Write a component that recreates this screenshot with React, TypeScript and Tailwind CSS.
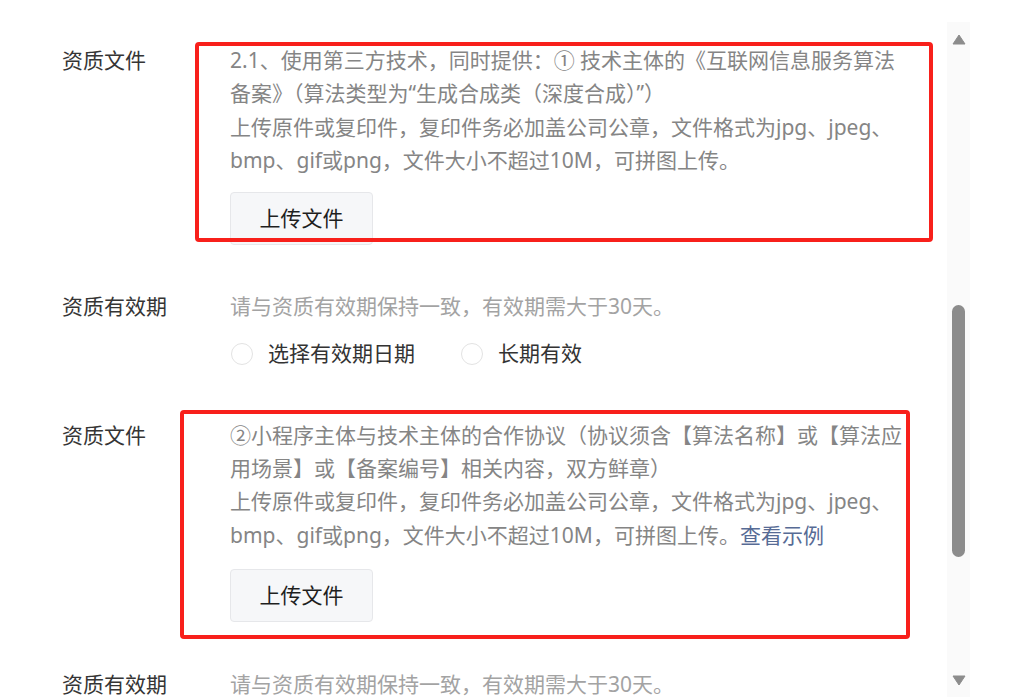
import React from 'react';

const FONT = { fontFamily: '"Microsoft YaHei", "Noto Sans", "Noto Sans CJK SC", sans-serif' };

const UploadButton = ({ className = '' }: { className?: string }) => (
  <button
    className={`w-[143px] h-[53px] rounded-[4px] border border-[#e6e7ea] bg-[#f6f7f9] text-[21px] text-[#1f1f1f] ${className}`}
  >
    上传文件
  </button>
);

const Radio = ({ label }: { label: string }) => (
  <div className="flex items-center">
    <span className="w-[22px] h-[22px] rounded-full border border-[#e3e3e3] bg-white" />
    <span className="ml-[15px] text-[21px] text-[#333]">{label}</span>
  </div>
);

const Label = ({ children }: { children: React.ReactNode }) => (
  <div className="w-[230px] shrink-0 pl-[62px] text-[21px] text-[#353535] whitespace-nowrap">{children}</div>
);

const ValidityRow = ({ withRadios = true }: { withRadios?: boolean }) => (
  <div className="flex">
    <Label>资质有效期</Label>
    <div className="flex-1">
      <p className="text-[21px] text-[#a3a3a3]">请与资质有效期保持一致，有效期需大于30天。</p>
      {withRadios && (
        <div className="flex items-center gap-[46px] mt-[14px] pl-px">
          <Radio label="选择有效期日期" />
          <Radio label="长期有效" />
        </div>
      )}
    </div>
  </div>
);

export default function App() {
  return (
    <div className="w-[1018px] h-[697px] overflow-hidden bg-white flex leading-[33.3px]" style={FONT}>
      <div className="w-[947px] shrink-0 pt-[44px]">
        {/* 资质文件 1 */}
        <div className="flex">
          <Label>资质文件</Label>
          <div className="relative flex-1">
            <div className="pointer-events-none absolute left-[-35px] top-[-2px] w-[738px] h-[200px] border-[4px] border-[#f8201b] rounded-[4px]" />
            <div className="text-[21px] text-[#858585]">
              <p className="whitespace-nowrap">2.1、使用第三方技术，同时提供：① 技术主体的《互联网信息服务算法</p>
              <p className="whitespace-nowrap">备案》（算法类型为“生成合成类（深度合成）”）</p>
              <p className="whitespace-nowrap">上传原件或复印件，复印件务必加盖公司公章，文件格式为jpg、jpeg、</p>
              <p className="whitespace-nowrap">bmp、gif或png，文件大小不超过10M，可拼图上传。</p>
            </div>
            <UploadButton className="mt-[15px]" />
          </div>
        </div>

        <div className="mt-[45px]">
          <ValidityRow />
        </div>

        {/* 资质文件 2 */}
        <div className="flex mt-[48px]">
          <Label>资质文件</Label>
          <div className="relative flex-1">
            <div className="pointer-events-none absolute left-[-50px] top-[-9px] w-[730px] h-[229px] border-[4px] border-[#f8201b] rounded-[4px]" />
            <div className="text-[21px] text-[#858585]">
              <p className="whitespace-nowrap">②小程序主体与技术主体的合作协议（协议须含【算法名称】或【算法应</p>
              <p className="whitespace-nowrap">用场景】或【备案编号】相关内容，双方鲜章）</p>
              <p className="whitespace-nowrap">上传原件或复印件，复印件务必加盖公司公章，文件格式为jpg、jpeg、</p>
              <p className="whitespace-nowrap">
                bmp、gif或png，文件大小不超过10M，可拼图上传。<span className="text-[#576b95]">查看示例</span>
              </p>
            </div>
            <UploadButton className="mt-[17px]" />
          </div>
        </div>

        <div className="mt-[46px]">
          <ValidityRow withRadios={false} />
        </div>
      </div>

      {/* scrollbar */}
      <div className="w-[23px] shrink-0 mt-[22px] bg-[#fafafa] flex flex-col items-center">
        <svg width="14" height="11" viewBox="0 0 14 11" className="mt-[12px]">
          <path d="M7 1 L13 10 L1 10 Z" fill="#8c8c8c" stroke="#8c8c8c" strokeLinejoin="round" />
        </svg>
        <div className="mt-[260px] w-[13px] h-[252px] rounded-full bg-[#8c8c8c]" />
        <svg width="14" height="11" viewBox="0 0 14 11" className="mt-[118px]">
          <path d="M1 1 L13 1 L7 10 Z" fill="#8c8c8c" stroke="#8c8c8c" strokeLinejoin="round" />
        </svg>
      </div>
    </div>
  );
}
